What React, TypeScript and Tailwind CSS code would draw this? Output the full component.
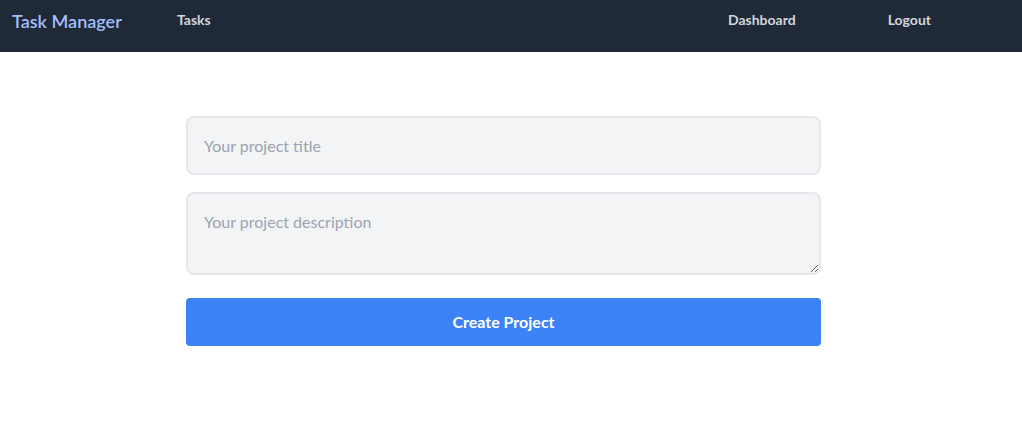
import React from 'react';

const font = { fontFamily: 'Lato, "Open Sans", sans-serif' };

const App: React.FC = () => {
  return (
    <div className="min-h-screen bg-white" style={font}>
      <nav className="flex h-[52px] items-start bg-[#1f2937] pt-[8px]">
        <div className="ml-[12px] w-[165px] text-[18px] leading-[26px] font-semibold text-[#a3bffa]">
          Task Manager
        </div>
        <a className="pt-[3px] text-[14px] leading-[18px] font-bold text-[#d1d5db]">Tasks</a>
        <a className="ml-auto pt-[3px] text-[14px] leading-[18px] font-bold text-[#d1d5db]">Dashboard</a>
        <a className="mr-[91px] ml-[92px] pt-[3px] text-[14px] leading-[18px] font-bold text-[#d1d5db]">Logout</a>
      </nav>
      <form className="ml-[186px] flex w-[635px] flex-col pt-[64px]">
        <input
          type="text"
          placeholder="Your project title"
          className="h-[59px] rounded-lg border-2 border-[#e5e7eb] bg-[#f3f4f6] px-[16px] text-[16px] text-gray-700 placeholder:text-[#9ca3af] outline-none"
        />
        <textarea
          placeholder="Your project description"
          className="mt-[17px] h-[83px] rounded-lg border-2 border-[#e5e7eb] bg-[#f3f4f6] px-[16px] pt-[16px] text-[16px] text-gray-700 placeholder:text-[#9ca3af] outline-none"
        />
        <button
          type="button"
          className="mt-[23px] h-[48px] rounded bg-[#3b82f6] text-[16px] font-bold text-white"
        >
          Create Project
        </button>
      </form>
    </div>
  );
};

export default App;
